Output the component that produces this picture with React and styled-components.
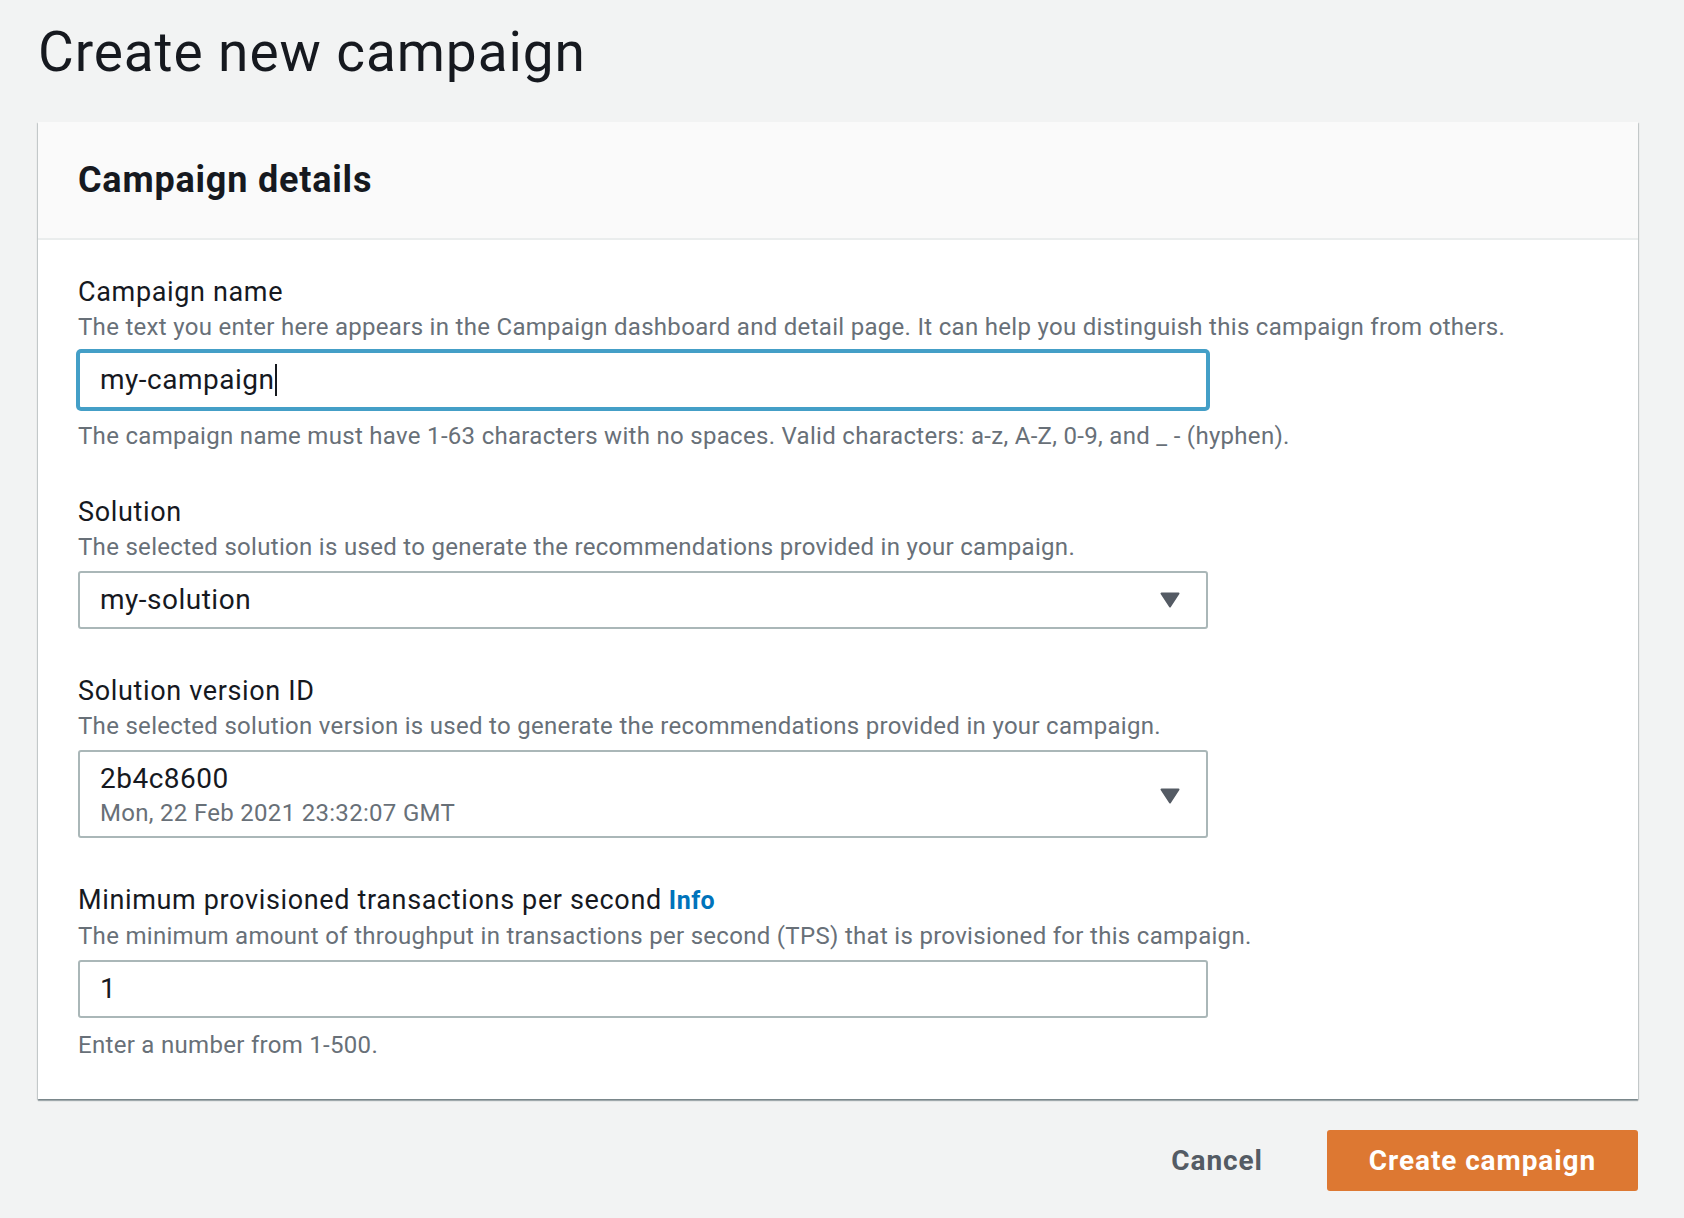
import React from 'react';
import styled, { createGlobalStyle } from 'styled-components';

const GlobalStyle = createGlobalStyle`
  body {
    margin: 0;
    background: #f2f3f3;
    font-family: Roboto, "Liberation Sans", sans-serif;
    color: #16191f;
  }
`;

const Page = styled.div`
  padding: 19px 46px 40px 38px;
`;

const Title = styled.h1`
  margin: 0 0 37px 0;
  font-size: 55px;
  font-weight: 400;
  line-height: 66px;
  letter-spacing: 0.9px;
  color: #16191f;
`;

const Card = styled.div`
  background: #fff;
  box-shadow: 0 2px 1px 0 rgba(0, 28, 36, 0.3), 1px 1px 1px 0 rgba(0, 28, 36, 0.15),
    -1px 1px 1px 0 rgba(0, 28, 36, 0.15);
`;

const CardHeader = styled.div`
  height: 116px;
  display: flex;
  align-items: center;
  padding: 0 40px;
  background: #fafafa;
  border-bottom: 2px solid #eaeded;
`;

const CardTitle = styled.h2`
  margin: 0;
  font-size: 36px;
  font-weight: 700;
  line-height: 44px;
  letter-spacing: 0.8px;
`;

const CardBody = styled.div`
  padding: 34px 40px 40px;
  display: flex;
  flex-direction: column;
  gap: 44px;
`;

const Field = styled.div`
  display: flex;
  flex-direction: column;
`;

const Label = styled.div`
  font-size: 27px;
  line-height: 36px;
  letter-spacing: 0.65px;
  color: #16191f;
`;

const InfoLink = styled.a`
  font-size: 25px;
  font-weight: 700;
  letter-spacing: 0.5px;
  color: #0073bb;
  text-decoration: none;
  margin-left: 7px;
`;

const Description = styled.div`
  font-size: 24px;
  line-height: 34px;
  letter-spacing: 0.3px;
  color: #687078;
`;

const Constraint = styled.div`
  margin-top: 13px;
  font-size: 24px;
  line-height: 28px;
  letter-spacing: 0.3px;
  color: #687078;
`;

const Control = styled.div`
  margin-top: 7px;
  width: 1130px;
  box-sizing: border-box;
  min-height: 58px;
  display: flex;
  align-items: center;
  padding: ${(p) => (p.$tall ? '10px 26px 6px 20px' : '0 26px 0 20px')};
  border: 2px solid ${(p) => (p.$focused ? '#449fc7' : '#aab7b8')};
  border-radius: 3px;
  box-shadow: ${(p) => (p.$focused ? '0 0 0 2px #449fc7' : 'none')};
  background: #fff;
`;

const Value = styled.div`
  flex: 1;
  display: flex;
  flex-direction: column;
`;

const MainText = styled.span`
  font-size: 28px;
  line-height: 34px;
  letter-spacing: 0.5px;
  color: #16191f;
`;

const SubText = styled.span`
  font-size: 24px;
  line-height: 34px;
  letter-spacing: 0.3px;
  color: #687078;
`;

const Caret = styled.span`
  display: inline-block;
  width: 2px;
  height: 32px;
  margin-left: 1px;
  vertical-align: -7px;
  background: #16191f;
`;

const Actions = styled.div`
  margin-top: 31px;
  display: flex;
  justify-content: flex-end;
  align-items: center;
  gap: 24px;
`;

const Button = styled.button`
  height: 61px;
  padding: 0 ${(p) => (p.$primary ? '42px' : '40px')};
  border: none;
  border-radius: 3px;
  font-family: inherit;
  font-size: 28px;
  font-weight: 700;
  letter-spacing: 0.9px;
  background: ${(p) => (p.$primary ? '#dd7832' : 'transparent')};
  color: ${(p) => (p.$primary ? '#fff' : '#545b64')};
  cursor: pointer;
`;

const CaretDown = () => (
  <svg width="20" height="16" viewBox="0 0 20 16">
    <polygon
      points="1.5,1.5 18.5,1.5 10,14.5"
      fill="#545b64"
      stroke="#545b64"
      strokeWidth="2"
      strokeLinejoin="round"
    />
  </svg>
);

const App = () => {
  return (
    <Page>
      <GlobalStyle />
      <Title>Create new campaign</Title>

      <Card>
        <CardHeader>
          <CardTitle>Campaign details</CardTitle>
        </CardHeader>

        <CardBody>
          <Field>
            <Label>Campaign name</Label>
            <Description>
              The text you enter here appears in the Campaign dashboard and detail page. It can help
              you distinguish this campaign from others.
            </Description>
            <Control $focused>
              <MainText>
                my-campaign
                <Caret />
              </MainText>
            </Control>
            <Constraint>
              The campaign name must have 1-63 characters with no spaces. Valid characters: a-z, A-Z,
              0-9, and _ - (hyphen).
            </Constraint>
          </Field>

          <Field>
            <Label>Solution</Label>
            <Description>
              The selected solution is used to generate the recommendations provided in your campaign.
            </Description>
            <Control>
              <Value>
                <MainText>my-solution</MainText>
              </Value>
              <CaretDown />
            </Control>
          </Field>

          <Field>
            <Label>Solution version ID</Label>
            <Description>
              The selected solution version is used to generate the recommendations provided in your
              campaign.
            </Description>
            <Control $tall>
              <Value>
                <MainText>2b4c8600</MainText>
                <SubText>Mon, 22 Feb 2021 23:32:07 GMT</SubText>
              </Value>
              <CaretDown />
            </Control>
          </Field>

          <Field>
            <Label>
              Minimum provisioned transactions per second
              <InfoLink href="#">Info</InfoLink>
            </Label>
            <Description>
              The minimum amount of throughput in transactions per second (TPS) that is provisioned
              for this campaign.
            </Description>
            <Control>
              <MainText>1</MainText>
            </Control>
            <Constraint>Enter a number from 1-500.</Constraint>
          </Field>
        </CardBody>
      </Card>

      <Actions>
        <Button>Cancel</Button>
        <Button $primary>Create campaign</Button>
      </Actions>
    </Page>
  );
};

export default App;
